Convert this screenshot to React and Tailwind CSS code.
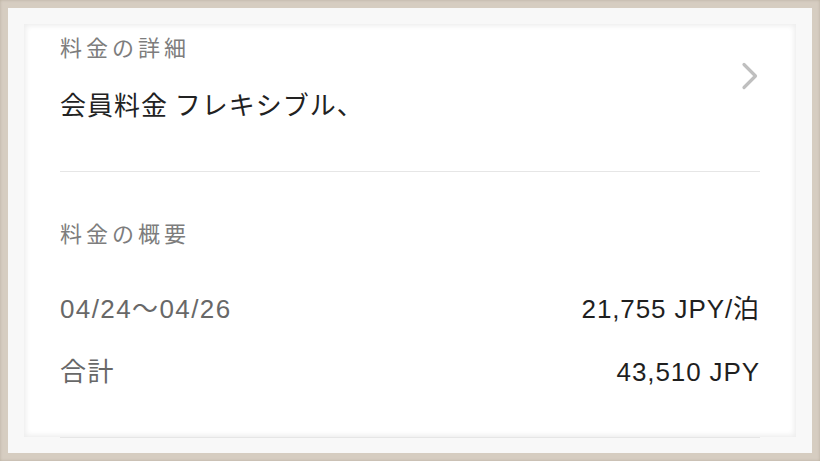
const jp = "font-['Noto_Sans_CJK_JP',sans-serif]";
const num = "font-['Liberation_Sans','Noto_Sans_CJK_JP',sans-serif]";

function PriceRow({ label, value, className = '' }) {
  return (
    <div className={`flex items-center justify-between h-8 ${className}`}>
      <span className={`${num} text-[26px] leading-8 tracking-[1.4px] text-[#686868]`}>{label}</span>
      <span className={`${num} text-[26px] leading-8 tracking-[0.9px] text-[#1f1f1f]`}>{value}</span>
    </div>
  );
}

export default function App() {
  return (
    <div className="w-[820px] h-[461px] bg-[#d6cdc1] p-2 shadow-[inset_0_0_3px_#b8ad9e]">
      <div className="h-full bg-white overflow-hidden shadow-[inset_0_0_0_16px_#f8f8f8,inset_0_0_5px_18px_#eeeeee]">
        <div className="px-[52px] pt-6">
          {/* Rate details */}
          <div className="flex items-center justify-between">
            <div>
              <p className={`${jp} text-[22px] leading-7 tracking-[4px] text-[#7d7d7d]`}>料金の詳細</p>
              <p className={`${jp} mt-7 text-[26px] leading-8 tracking-[1px] text-[#222]`}>会員料金 フレキシブル、</p>
            </div>
            <svg width="18" height="30" viewBox="0 0 18 30" className="mr-[1px]">
              <path d="M3 3.5 L14.5 15 L3 26.5" fill="none" stroke="#bfbfbf" strokeWidth="3.2" strokeLinecap="round" strokeLinejoin="round" />
            </svg>
          </div>

          <div className="mt-[51px] h-px bg-[#e6e6e6]" />

          {/* Summary */}
          <p className={`${jp} mt-[46px] text-[22px] leading-7 tracking-[4px] text-[#7d7d7d]`}>料金の概要</p>
          <PriceRow className="mt-[47px]" label="04/24〜04/26" value="21,755 JPY/泊" />
          <PriceRow className="mt-[31px]" label="合計" value="43,510 JPY" />

          <div className="mt-[49px] h-px bg-[#e6e6e6]" />
        </div>
      </div>
    </div>
  );
}
